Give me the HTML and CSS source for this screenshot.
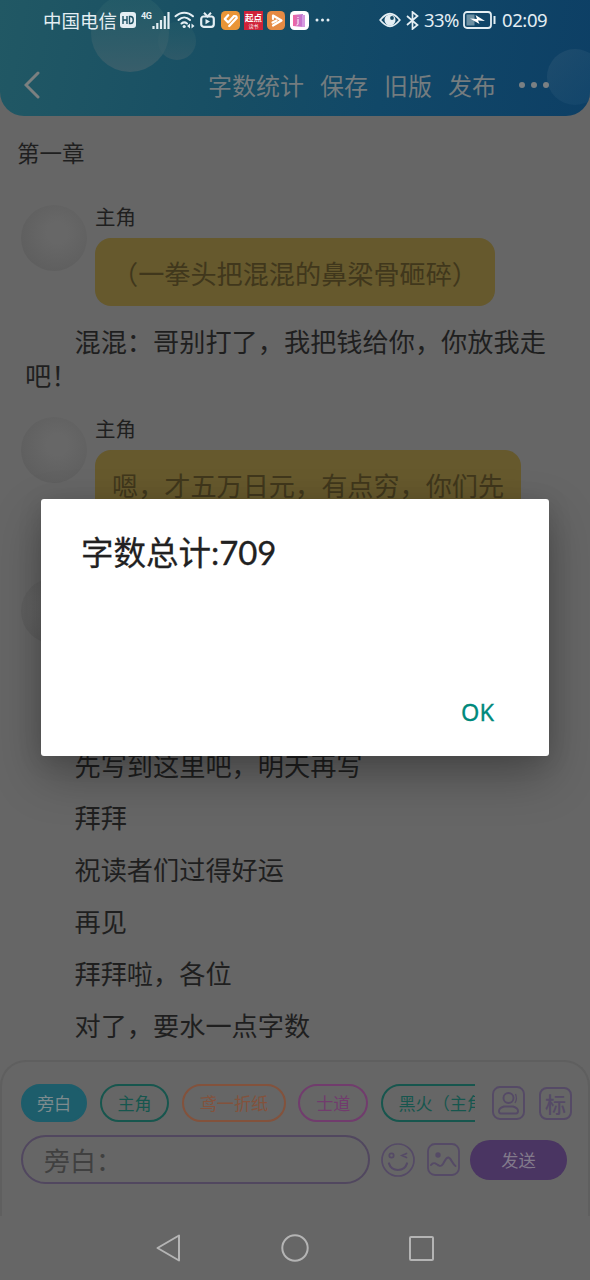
FILE: index.html
```html
<!DOCTYPE html>
<html lang="zh-CN">
<head>
<meta charset="utf-8">
<title>第一章</title>
<link rel="stylesheet" href="styles.css">
</head>
<body>
<div class="screen">
  <header class="top">
    <svg class="bubbles" viewBox="0 0 590 116">
      <defs>
        <linearGradient id="ball" x1="0" y1="0" x2="0" y2="1"><stop offset="0" stop-color="#29616b" stop-opacity=".5"/><stop offset="1" stop-color="#3c5f6b"/></linearGradient>
        <linearGradient id="ball2" x1="0" y1="0" x2="1" y2="1"><stop offset="0" stop-color="#24506f" stop-opacity=".75"/><stop offset="1" stop-color="#164a70" stop-opacity=".5"/></linearGradient>
      </defs>
      <circle cx="177" cy="41" r="19" fill="url(#ball)" opacity=".6"/>
      <circle cx="130" cy="33" r="39" fill="url(#ball)" opacity=".9"/>
      <circle cx="575" cy="77" r="28" fill="url(#ball2)"/>
    </svg>
    <div class="status">
      <div class="status-left">
        <span class="carrier">中国电信</span>
        <svg class="hd" width="16" height="16" viewBox="0 0 16 16"><rect width="16" height="16" rx="3" fill="#e4eef3"/><path d="M3 4v8M7 4v8M3 8h4M9.500 4.500v7h1.200c3.400 0 3.400-7 0-7z" fill="none" stroke="#1b5062" stroke-width="1.400"/></svg>
        <span class="net">4G</span>
        <svg class="signal" width="18" height="17" viewBox="0 0 18 17"><path d="M1.500 14v3M5.300 11v6M9 8v9M12.800 4v13M16.500 0v17" stroke="#e4eef3" stroke-width="2.200"/></svg>
        <svg class="wifi" width="21" height="18" viewBox="0 0 21 18"><g fill="none" stroke="#e4eef3" stroke-width="2" stroke-linecap="round"><path d="M1.500 5.300C6.500 .4 14 .4 19 5.300M4.500 9C8 5.500 12.500 5.500 16 9M7.500 12.500C9.300 11 11.200 11 13 12.500"/></g><circle cx="10.200" cy="15.500" r="1.600" fill="#e4eef3"/><path d="M13 15l3-2.500v5zM20.500 15l-3-2.500v5z" fill="#e4eef3"/></svg>
        <svg class="tv" width="15" height="16" viewBox="0 0 15 16"><rect x="1.200" y="4.500" width="12.600" height="10.300" rx="2.500" fill="none" stroke="#e4eef3" stroke-width="2.200"/><path d="M4 .8l3.500 3.700L11 .8" fill="none" stroke="#e4eef3" stroke-width="2"/><path d="M5.500 7l4.500 2.600-4.500 2.700z" fill="#e4eef3"/></svg>
        <svg class="app" width="19" height="19" viewBox="0 0 19 19"><rect width="19" height="19" rx="4.500" fill="#e99536"/><path d="M7.200 4.300L3.800 8l3.400 3.400 5.600-6.200q2.800-.6 2.900 1.800L8.200 15" stroke="#fff" stroke-width="2.300" fill="none" stroke-linecap="round" stroke-linejoin="round"/><path d="M6 9L10 4.800" stroke="#e99536" stroke-width="1"/></svg>
        <span class="qidian"><b>起点</b><i>读书</i></span>
        <svg class="app" width="18" height="19" viewBox="0 0 18 19"><rect width="18" height="19" rx="4.500" fill="#e58a44"/><path d="M6 8V4.500l8.500 5-8.500 5" fill="none" stroke="#fff" stroke-width="2.200" stroke-linejoin="round" stroke-linecap="round"/><path d="M5.500 11.500l4-2" stroke="#fff" stroke-width="2.200" stroke-linecap="round"/></svg>
        <svg class="app" width="19" height="19" viewBox="0 0 19 19"><defs><linearGradient id="pk"><stop stop-color="#f266a0"/><stop offset="1" stop-color="#b978d8"/></linearGradient></defs><rect width="19" height="19" rx="4.500" fill="#fff"/><path d="M3 4l10-1v13L3 15z" fill="url(#pk)"/><path d="M12 4h3v12h-3z" fill="#d59ae0"/><path d="M8 6v1M8 8v5q0 1-1.500 1" stroke="#fff" stroke-width="1" fill="none"/></svg>
        <svg class="more" width="15" height="4" viewBox="0 0 15 4"><g fill="#e4eef3"><circle cx="2" cy="2" r="1.500"/><circle cx="7.500" cy="2" r="1.500"/><circle cx="13" cy="2" r="1.500"/></g></svg>
      </div>
      <div class="status-right">
        <svg width="22" height="16" viewBox="0 0 22 16"><path d="M1.200 8Q11-4.500 20.800 8 11 20.500 1.200 8z" fill="none" stroke="#e4eef3" stroke-width="1.800"/><circle cx="11" cy="8" r="5.500" fill="#e4eef3"/><circle cx="13" cy="6" r="1.900" fill="#154b66"/></svg>
        <svg class="bt" width="13" height="19" viewBox="0 0 13 19"><path d="M1 5l10.500 9L6.500 18V1l5 4L1 14" fill="none" stroke="#e4eef3" stroke-width="1.700"/></svg>
        <span class="pct">33%</span>
        <svg class="batt" width="33" height="18" viewBox="0 0 33 18"><rect x="1" y="1" width="27" height="16" rx="3" fill="none" stroke="#e4eef3" stroke-width="1.800"/><rect x="3.500" y="3.500" width="8" height="11" fill="#6d90a3"/><path d="M7 7.500l7 .5-1.500-4L22 10l-7-.5 1.500 3.500z" fill="#fff"/><path d="M31.500 5v8" stroke="#e4eef3" stroke-width="2"/></svg>
        <span class="clock">02:09</span>
      </div>
    </div>
    <nav class="menu">
      <svg class="back" width="16" height="28" viewBox="0 0 16 28"><path d="M14 2L2 14l12 12" fill="none" stroke="#7b8080" stroke-width="3" stroke-linecap="round"/></svg>
      <span>字数统计</span><span>保存</span><span>旧版</span><span>发布</span>
      <svg class="dots" width="30" height="6" viewBox="0 0 30 6"><g fill="#7b8083"><circle cx="3" cy="3" r="3"/><circle cx="15" cy="3" r="3"/><circle cx="27" cy="3" r="3"/></g></svg>
    </nav>
  </header>

  <main class="story">
    <h1 class="chapter">第一章</h1>
    <section class="msg">
      <div class="avatar"></div>
      <div><div class="name">主角</div><div class="bubble">（一拳头把混混的鼻梁骨砸碎）</div></div>
    </section>
    <p class="narration">混混：哥别打了，我把钱给你，你放我走吧！</p>
    <section class="msg">
      <div class="avatar"></div>
      <div><div class="name">主角</div><div class="bubble tall">嗯，才五万日元，有点穷，你们先</div></div>
    </section>
    <section class="msg last"><div class="avatar"></div></section>
    <p class="line">先写到这里吧，明天再写</p>
    <p class="line">拜拜</p>
    <p class="line">祝读者们过得好运</p>
    <p class="line">再见</p>
    <p class="line">拜拜啦，各位</p>
    <p class="line">对了，要水一点字数</p>
  </main>

  <footer class="composer">
    <div class="roles">
      <div class="chips">
        <span class="chip active">旁白</span><span class="chip teal">主角</span><span class="chip orange">鸢一折纸</span><span class="chip pink">士道</span><span class="chip teal">黑火（主角</span>
      </div>
      <svg class="person" width="33" height="34" viewBox="0 0 33 34"><g fill="none" stroke="#554a66" stroke-width="1.900"><rect x="1" y="1" width="31" height="32" rx="7"/><circle cx="16.500" cy="12" r="5"/><path d="M12 20.500h9q5 1.500 5 4.500 0 2.500-2 2.500H9q-2 0-2-2.500 0-3 5-4.500z"/><path d="M23.500 8q2 5-.5 9" stroke-width="1.300"/></g></svg>
      <span class="mark">标</span>
    </div>
    <div class="compose">
      <div class="field">旁白：</div>
      <svg class="smile" width="34" height="34" viewBox="0 0 34 34"><g fill="none" stroke="#554a66" stroke-width="1.700" stroke-linecap="round"><circle cx="17" cy="17" r="16"/><circle cx="10.500" cy="12.500" r="2.200"/><path d="M25.500 10.500l-4.500 2 4.500 2"/><path d="M8 20.500q2 6.500 9 6.500t9-6.500" stroke-width="2.200"/></g></svg>
      <svg class="pic" width="33" height="33" viewBox="0 0 33 33"><rect x="1" y="1" width="31" height="31" rx="7" fill="none" stroke="#554a66" stroke-width="1.800"/><circle cx="11" cy="12" r="2.700" fill="#554a66"/><path d="M4 22c3-4 5-1 7 0s3 2 5-1 3-7 5.500-6.500 4 6.500 7 8.500" fill="none" stroke="#554a66" stroke-width="2" stroke-linecap="round"/></svg>
      <span class="send">发送</span>
    </div>
  </footer>
  <div class="sysnav">
    <svg width="25" height="28" viewBox="0 0 25 28"><path d="M23 1.500v25L1.500 14z" fill="none" stroke="#b4b4b4" stroke-width="2" stroke-linejoin="round"/></svg>
    <svg width="28" height="28" viewBox="0 0 28 28"><circle cx="14" cy="14" r="12.700" fill="none" stroke="#b4b4b4" stroke-width="2"/></svg>
    <svg width="25" height="25" viewBox="0 0 25 25"><rect x="1" y="1" width="23" height="23" rx="1" fill="none" stroke="#b4b4b4" stroke-width="2"/></svg>
  </div>

  <div class="dialog">
    <div class="dialog-title">字数总计<span class="num">:709</span></div>
    <div class="dialog-actions"><span class="ok">OK</span></div>
  </div>
</div>
</body>
</html>
```

FILE: styles.css
```css
* { box-sizing: border-box; }
body { margin: 0; background: #666; font-family: "Noto Sans CJK SC", sans-serif; }
p, h1 { margin: 0; font-weight: 400; }
svg { display: block; flex: none; }
.screen { position: relative; width: 590px; height: 1280px; overflow: hidden; display: flex; flex-direction: column; background: #666; }

.top { position: relative; height: 116px; flex: none; overflow: hidden; border-radius: 0 0 24px 24px; background: linear-gradient(100deg, #215864 0%, #174e64 40%, #114868 65%, #0d3f65 100%); }
.bubbles { position: absolute; inset: 0; width: 590px; height: 116px; }
.status { position: relative; height: 40px; display: flex; justify-content: space-between; padding: 0 40px 0 43px; color: #e4eef3; }
.status-left, .status-right { display: flex; align-items: center; }
.carrier { font-size: 18.500px; line-height: 40px; white-space: nowrap; }
.hd { margin-left: 3px; }
.net { font: 700 9px/10px Roboto, sans-serif; margin: 0 0 9px 5px; width: 11px; letter-spacing: -.4px; }
.wifi { margin-left: 4px; }
.tv { margin-left: 5px; }
.app { margin-left: 5px; }
.tv + .app { margin-left: 6px; }
.qidian { margin-left: 4px; width: 19px; height: 19px; background: #cf2339; color: #fff; display: flex; flex-direction: column; align-items: center; flex: none; }
.qidian b { font-size: 8.500px; line-height: 13px; font-weight: 700; }
.qidian i { font-size: 5px; line-height: 4px; font-style: normal; }
.qidian + .app { margin-left: 4px; }
.more { margin-left: 6px; }
.bt { margin-left: 5px; }
.pct, .clock { font-family: "Noto Sans", sans-serif; font-size: 18.500px; line-height: 40px; }
.pct { margin-left: 5px; width: 35px; letter-spacing: -.6px; }
.batt { margin-left: 4px; }
.clock { width: 48px; margin-left: 6px; letter-spacing: -.4px; }
.menu { position: relative; display: flex; align-items: center; gap: 16px; height: 74px; margin-top: 8px; padding: 0 40px 0 24px; font-size: 24px; line-height: 74px; color: #747c7f; white-space: nowrap; }
.back { margin-right: 152px; }
.dots { margin-left: 7px; }

.story { height: 944px; flex: none; color: #1f1f1f; font-size: 26.200px; }
.chapter { height: 89px; padding: 19px 17px; font-size: 22.500px; line-height: 34px; }
.msg { display: flex; gap: 8px; padding-left: 21px; }
.avatar { width: 66px; height: 66px; border-radius: 50%; background: radial-gradient(circle at 55% 42%, #676767 20%, #5b5b5b 100%); flex: none; }
.name { height: 33px; font-size: 20.500px; line-height: 22px; }
.bubble { height: 68px; padding: 0 17px; border-radius: 16px; background: #66592d; color: #40371c; line-height: 70px; font-size: 26.150px; white-space: nowrap; }
.bubble.tall { height: 102px; }
.narration { margin: 18px 24px 25px 25px; line-height: 34px; text-indent: 49.500px; }
.last { margin-top: 26px; height: 161px; }
.line { height: 52px; line-height: 52px; padding-left: 74.500px; }

.composer { height: 156px; flex: none; padding: 22px 0 0 20px; border: 2px solid #5f5f5f; border-bottom: 0; border-radius: 26px 26px 0 0; }
.roles { display: flex; align-items: center; height: 38px; }
.chips { display: flex; gap: 12.500px; width: 454px; height: 38px; overflow: hidden; margin-left: -1px; }
.chip { flex: none; height: 38px; padding: 0 15.800px; border: 2px solid; border-radius: 19px; font-size: 17.100px; line-height: 34px; white-space: nowrap; }
.active { background: #1d5d6b; border-color: #1d5d6b; color: #7d8b8e; padding: 0 14px; }
.teal { color: #17564e; }
.orange { color: #83523c; }
.pink { color: #713c6d; }
.person { margin-left: 17px; }
.mark { width: 33px; height: 33px; margin-left: 14px; border: 2px solid #554a66; border-radius: 8px; color: #554a66; font-size: 21px; font-weight: 500; line-height: 28px; text-align: center; }
.compose { display: flex; align-items: center; height: 49px; margin: 13px 0 0 -1px; }
.field { width: 349px; height: 49px; border: 2px solid #51475f; border-radius: 25px; padding-left: 21px; font-size: 26px; line-height: 45px; color: #404040; }
.smile { margin-left: 11px; }
.pic { margin-left: 12px; }
.send { width: 97px; height: 40px; margin-left: 10px; border-radius: 20px; background: #4a3562; color: #827a8b; font-size: 17.300px; line-height: 40px; text-align: center; }
.sysnav { height: 64px; flex: none; display: flex; align-items: center; justify-content: center; gap: 100px; }

.dialog { position: absolute; left: 41px; top: 499px; width: 508px; height: 257px; background: #fff; border-radius: 3px; padding: 30px 40px 19px; display: flex; flex-direction: column; justify-content: space-between; box-shadow: 0 20px 48px rgba(0,0,0,.28), 0 4px 24px rgba(0,0,0,.12); }
.dialog-title { color: #212121; font-size: 32.500px; line-height: 44px; font-weight: 400; -webkit-text-stroke: .3px #212121; white-space: nowrap; }
.num { font-family: Lato, "Noto Sans", sans-serif; font-size: 33px; letter-spacing: -.1px; }
.dialog-actions { display: flex; justify-content: flex-end; padding-right: 15px; }
.ok { color: #00897b; font-family: "Noto Sans", sans-serif; font-weight: 400; -webkit-text-stroke: .3px #00897b; font-size: 23.500px; line-height: 50px; }
```
